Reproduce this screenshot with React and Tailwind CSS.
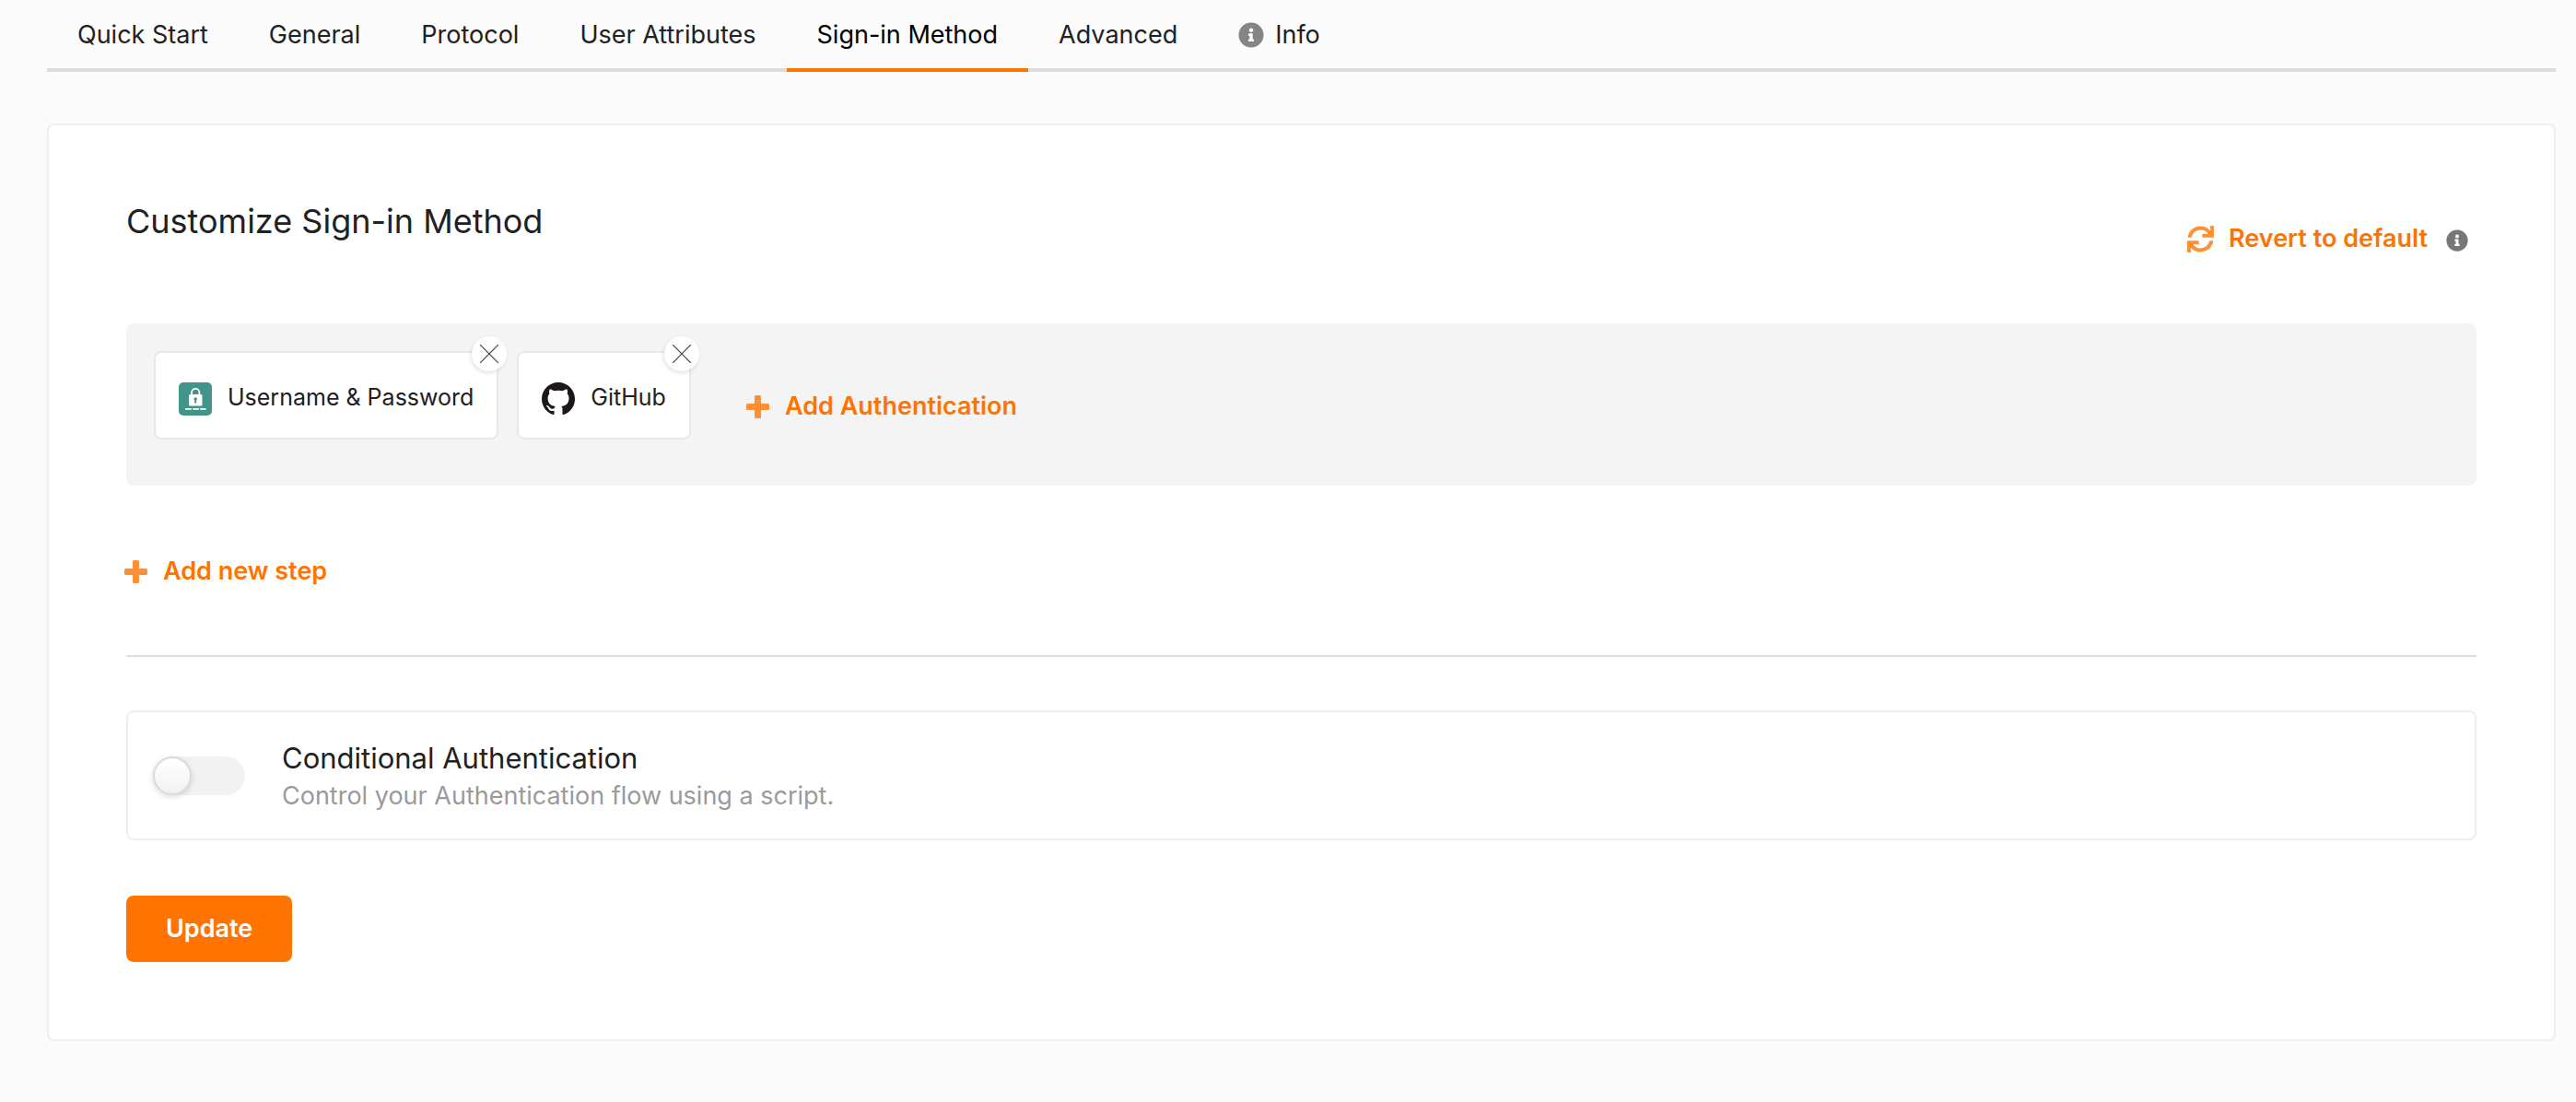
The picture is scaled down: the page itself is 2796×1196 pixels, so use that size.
import { useState } from "react";
import { FaInfoCircle, FaSync } from "react-icons/fa";

const TABS = [
  "Quick Start",
  "General",
  "Protocol",
  "User Attributes",
  "Sign-in Method",
  "Advanced",
  "Info",
];

function PlusIcon() {
  return (
    <svg viewBox="0 0 25 25" className="size-[25px] shrink-0 fill-[#ff8f33]" aria-hidden="true">
      <rect x="9" y="0" width="7" height="25" rx="1.5" />
      <rect x="0" y="9" width="25" height="7" rx="1.5" />
    </svg>
  );
}

function PasswordIcon() {
  return (
    <svg viewBox="0 0 36 36" className="size-9 shrink-0" aria-hidden="true">
      <rect width="36" height="36" rx="5" fill="#419488" />
      <path d="M14 14v-3a4.2 4.2 0 0 1 8.4 0v3" fill="none" stroke="#fff" strokeWidth="1.8" />
      <rect x="11" y="13" width="14.5" height="12.5" rx="1.5" fill="#fff" />
      <circle cx="18.2" cy="18" r="1.8" fill="#419488" />
      <path d="M17.5 18h1.4l.4 4.6h-2.2z" fill="#419488" />
      <path d="M7 28.8h6.8M15.2 28.8h6.6M23.2 28.8h6.4" stroke="#fff" strokeWidth="1.8" />
    </svg>
  );
}

function GitHubIcon() {
  return (
    <svg viewBox="0 0 16 16" className="size-9 shrink-0 fill-[#1b1817]" aria-hidden="true">
      <path d="M8 0C3.58 0 0 3.58 0 8c0 3.54 2.29 6.53 5.47 7.59.4.07.55-.17.55-.38 0-.19-.01-.82-.01-1.49-2.01.37-2.53-.49-2.69-.94-.09-.23-.48-.94-.82-1.13-.28-.15-.68-.52-.01-.53.63-.01 1.08.58 1.23.82.72 1.21 1.87.87 2.33.66.07-.52.28-.87.51-1.07-1.78-.2-3.64-.89-3.64-3.95 0-.87.31-1.59.82-2.15-.08-.2-.36-1.02.08-2.12 0 0 .67-.21 2.2.82.64-.18 1.32-.27 2-.27s1.36.09 2 .27c1.53-1.04 2.2-.82 2.2-.82.44 1.1.16 1.92.08 2.12.51.56.82 1.27.82 2.15 0 3.07-1.87 3.75-3.65 3.95.29.25.54.73.54 1.48 0 1.07-.01 1.93-.01 2.2 0 .21.15.46.55.38A8.01 8.01 0 0 0 16 8c0-4.42-3.58-8-8-8z" />
    </svg>
  );
}

function Authenticator({ icon, name }) {
  return (
    <div className="relative flex h-24 items-center gap-[17px] rounded-lg border-2 border-[#e8e8e8] bg-white pl-[25px] pr-[25px] pt-1">
      <span className="pt-1">{icon}</span>
      <span className="text-[25px] leading-8">{name}</span>
      <button
        type="button"
        aria-label={`Remove ${name}`}
        className="absolute -right-[11px] -top-[18px] grid size-[38px] place-items-center rounded-full bg-white shadow-[-1px_2px_4px_rgba(0,0,0,0.12)]"
      >
        <svg viewBox="0 0 20 20" className="size-5" aria-hidden="true">
          <path d="M0 0l20 20M20 0L0 20" stroke="#444" strokeWidth="1.2" />
        </svg>
      </button>
    </div>
  );
}

const linkButton = "flex h-[72px] items-center text-[27px] leading-9 font-semibold text-[#ff7300]";

export default function App() {
  const [active, setActive] = useState("Sign-in Method");
  const [conditional, setConditional] = useState(false);

  return (
    <div className="min-h-screen bg-[#fbfbfb] pl-[51px] pr-[22px] pb-16 font-['Inter','Liberation_Sans',sans-serif] text-[#212121]">
      <nav className="flex border-b-4 border-[#dcdcdc]">
        {TABS.map((tab) => (
          <button
            key={tab}
            type="button"
            onClick={() => setActive(tab)}
            className={
              "-mb-1 flex h-[78px] items-center gap-3 border-b-4 px-[33px] pt-0.5 text-[27px] leading-9 " +
              (tab === active ? "border-[#ff7300] text-black" : "border-transparent")
            }
          >
            {tab === "Info" && <FaInfoCircle className="size-7 text-[#858585]" />}
            {tab}
          </button>
        ))}
      </nav>

      <main className="mt-14 rounded-lg border-2 border-[#eeeeee] bg-white px-[84px] pb-[84px] pt-[79px]">
        <div className="flex justify-between">
          <h1 className="text-[36px] leading-[50px]">Customize Sign-in Method</h1>
          <div className="mt-2 mr-[9px] flex items-center gap-5">
            <button type="button" className={linkButton + " gap-4"}>
              <FaSync className="size-[29px] text-[#ff8f33]" />
              Revert to default
            </button>
            <FaInfoCircle className="mt-1 size-6 text-[#777777]" />
          </div>
        </div>

        <section className="mt-14 flex items-start gap-5 rounded-lg bg-[#f4f4f4] px-[30px] pb-[50px] pt-[30px]">
          <Authenticator icon={<PasswordIcon />} name="Username & Password" />
          <Authenticator icon={<GitHubIcon />} name="GitHub" />
          <button type="button" className={linkButton + " ml-10 mt-6 gap-[17px]"}>
            <PlusIcon />
            Add Authentication
          </button>
        </section>

        <button type="button" className={linkButton + " -ml-0.5 mt-[57px] gap-[17px]"}>
          <PlusIcon />
          Add new step
        </button>

        <hr className="mt-[55px] border-t-2 border-[#dedede]" />

        <label className="mt-[58px] flex h-[141px] items-center gap-10 rounded-lg border-2 border-[#eeeeee] px-[27px]">
          <input
            type="checkbox"
            role="switch"
            checked={conditional}
            onChange={(e) => setConditional(e.target.checked)}
            aria-label="Conditional Authentication"
            className="peer sr-only"
          />
          <span className="flex h-[42px] w-[100px] shrink-0 rounded-full bg-[#f2f2f2] peer-checked:justify-end peer-checked:bg-[#ff7300]">
            <span className="size-[42px] rounded-full border-2 border-[#dadada] bg-linear-to-b from-white to-[#f2f2f2] shadow-[0_2px_6px_rgba(0,0,0,0.15)]" />
          </span>
          <span className="flex flex-col pt-1">
            <span className="text-[31px] leading-10">Conditional Authentication</span>
            <span className="text-[27px] leading-[42px] text-[#9a9a9a]">
              Control your Authentication flow using a script.
            </span>
          </span>
        </label>

        <button
          type="button"
          className="mt-[60px] h-[72px] rounded-lg bg-[#ff7300] px-[43px] text-[27px] leading-9 font-semibold text-white"
        >
          Update
        </button>
      </main>
    </div>
  );
}
